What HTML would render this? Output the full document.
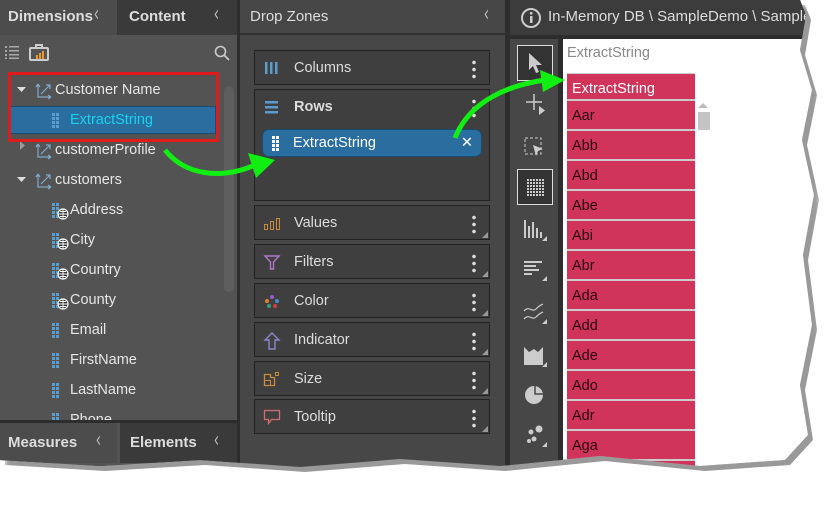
<!DOCTYPE html>
<html><head><meta charset="utf-8"><style>
*{box-sizing:border-box;margin:0;padding:0}
body{width:840px;height:507px;background:#fff;position:relative;overflow:hidden;font-family:"Liberation Sans",sans-serif;font-size:14px;color:#ddd}
.a{position:absolute}
#shadow{left:5px;top:5px;width:815px;height:478px;background:#999;filter:blur(3px);clip-path:polygon(0 0,800px 0,806px 15px,800px 50px,812px 90px,802px 140px,814px 195px,803px 255px,812px 325px,800px 385px,808px 435px,785px 460px,700px 466px,600px 456px,500px 466px,400px 459px,300px 467px,200px 460px,100px 466px,0 460px)}
#main{left:0;top:0;width:815px;height:478px;background:#474747;clip-path:polygon(0 0,800px 0,806px 15px,800px 50px,812px 90px,802px 140px,814px 195px,803px 255px,812px 325px,800px 385px,808px 435px,785px 460px,700px 466px,600px 456px,500px 466px,400px 459px,300px 467px,200px 460px,100px 466px,0 460px)}
.hd{height:35px;line-height:34px;font-size:15px;color:#ddd}
.lt{position:absolute;font-weight:normal;color:#bbb;font-size:22px;font-family:"DejaVu Sans",sans-serif;transform:scaleX(0.6)}
.r{position:absolute;height:30px;line-height:30px;font-size:14.5px;color:#e6e6e6}
.box{position:absolute;left:254px;width:236px;background:#3f3f3f;border:1px solid #222;font-size:14.5px}
.box .t{position:absolute;left:39px;top:9px}
.box svg{position:absolute;left:8px;top:9px}
.dots{position:absolute;right:13px;top:8px;width:4px;height:20px;background:radial-gradient(circle,#ddd 1.6px,transparent 2px) 0 0/4px 7px repeat-y}
.tri{position:absolute;right:1px;bottom:1px;border-left:6px solid transparent;border-bottom:6px solid #999}
.cell{position:absolute;left:567px;width:128px;height:30px;background:#d0345a;border-bottom:2px solid #ccc;line-height:30px;padding-left:5px;color:#2a0a12;font-size:14.5px}
.tb{position:absolute;left:517px;width:36px;height:36px;color:#ccc}
</style></head><body>
<svg width="0" height="0" style="position:absolute"><defs>
<g id="grid"><rect x="0" y="0" width="3" height="3" fill="#5a9ccc"/><rect x="4" y="0" width="3" height="3" fill="#5a9ccc"/><rect x="0" y="4" width="3" height="3" fill="#5a9ccc"/><rect x="4" y="4" width="3" height="3" fill="#5a9ccc"/><rect x="0" y="8" width="3" height="3" fill="#5a9ccc"/><rect x="4" y="8" width="3" height="3" fill="#5a9ccc"/><rect x="0" y="12" width="3" height="3" fill="#5a9ccc"/><rect x="4" y="12" width="3" height="3" fill="#5a9ccc"/></g>
<g id="globe"><circle cx="6" cy="6" r="5" fill="#333" stroke="#fff" stroke-width="1.2"/><path d="M1 6h10M6 1v10M3 3.5h6M3 8.5h6" stroke="#fff" stroke-width="0.9" fill="none"/></g>
<g id="hier"><path d="M3 2v13h13M3 2l-2 3M3 2l2 3M16 15l-3-2M16 15l-3 2M6 12l9-9M11 3h4v4" stroke="#7fa9cc" stroke-width="1.2" fill="none"/></g>
</defs></svg>
<div id="shadow" class="a"></div>
<div id="main" class="a">
<div class="a" style="left:0;top:0;width:237px;height:480px;background:#535353"></div>
<div class="a hd" style="left:0;top:0;width:117px;background:#4c4c4c;padding-left:8px;font-weight:bold">Dimensions<span class="lt" style="left:92px;top:-2px">&lsaquo;</span></div>
<div class="a hd" style="left:117px;top:0;width:120px;background:#3a3a3a;padding-left:12px;font-weight:bold">Content<span class="lt" style="right:16px;top:-2px">&lsaquo;</span></div>
<svg class="a" style="left:5px;top:45px" width="14" height="14"><g fill="#aaa"><rect x="0" y="1" width="2" height="2"/><rect x="4" y="1" width="10" height="1.5"/><rect x="0" y="5" width="2" height="2"/><rect x="4" y="5" width="10" height="1.5"/><rect x="0" y="9" width="2" height="2"/><rect x="4" y="9" width="10" height="1.5"/><rect x="0" y="12.5" width="2" height="1.5"/><rect x="4" y="12.5" width="10" height="1.5"/></g></svg>
<div class="a" style="left:29px;top:47px;width:20px;height:14px;border:2px solid #ccc;border-radius:2px"><div class="a" style="left:5px;top:6px;width:2px;height:4px;background:#e89a2c"></div><div class="a" style="left:8px;top:4px;width:2px;height:6px;background:#e89a2c"></div><div class="a" style="left:11px;top:2px;width:2px;height:8px;background:#e89a2c"></div></div>
<div class="a" style="left:35px;top:44px;width:8px;height:4px;border:2px solid #ccc;border-bottom:0"></div>
<svg class="a" style="left:214px;top:45px" width="16" height="16"><circle cx="6.5" cy="6.5" r="5" fill="none" stroke="#ccc" stroke-width="1.6"/><path d="M10 10l5 5" stroke="#ccc" stroke-width="1.8"/></svg>
<div class="a" style="left:224px;top:86px;width:10px;height:206px;background:#5e5e5e;border-radius:5px"></div>
<div class="a" style="left:9px;top:106px;width:207px;height:28px;background:#2a6ea0;border:1px solid #1b4b70"></div>
<svg class="a" style="left:0;top:75px" width="237" height="345">
<path d="M17 12h9l-4.5 5z" fill="#ddd"/><use href="#hier" x="35" y="7"/>
<use href="#grid" x="52" y="38"/>
<path d="M20 66v9l5-4.5z" fill="#999"/><use href="#hier" x="35" y="67"/>
<path d="M17 102h9l-4.5 5z" fill="#ddd"/><use href="#hier" x="35" y="97"/>
<use href="#grid" x="52" y="128"/><use href="#globe" x="57" y="133"/>
<use href="#grid" x="52" y="158"/><use href="#globe" x="57" y="163"/>
<use href="#grid" x="52" y="188"/><use href="#globe" x="57" y="193"/>
<use href="#grid" x="52" y="218"/><use href="#globe" x="57" y="223"/>
<use href="#grid" x="52" y="248"/><use href="#grid" x="52" y="278"/><use href="#grid" x="52" y="308"/><use href="#grid" x="52" y="338"/>
</svg>
<div class="r" style="left:55px;top:75px">Customer Name</div>
<div class="r" style="left:70px;top:105px;color:#19d2ee">ExtractString</div>
<div class="r" style="left:55px;top:135px">customerProfile</div>
<div class="r" style="left:55px;top:165px">customers</div>
<div class="r" style="left:70px;top:195px">Address</div>
<div class="r" style="left:70px;top:225px">City</div>
<div class="r" style="left:70px;top:255px">Country</div>
<div class="r" style="left:70px;top:285px">County</div>
<div class="r" style="left:70px;top:315px">Email</div>
<div class="r" style="left:70px;top:345px">FirstName</div>
<div class="r" style="left:70px;top:375px">LastName</div>
<div class="r" style="left:70px;top:405px;height:15px;overflow:hidden">Phone</div>
<div class="a" style="left:8px;top:72px;width:211px;height:70px;border:3px solid #e01b1b"></div>
<div class="a" style="left:0;top:420px;width:237px;height:3px;background:#2d2d2d"></div>
<div class="a hd" style="left:0;top:423px;width:117px;height:40px;line-height:40px;background:#4c4c4c;padding-left:8px;font-weight:bold">Measures<span class="lt" style="right:14px;top:-2px">&lsaquo;</span></div>
<div class="a hd" style="left:120px;top:423px;width:117px;height:40px;line-height:40px;background:#3a3a3a;padding-left:10px;font-weight:bold">Elements<span class="lt" style="right:16px;top:-2px">&lsaquo;</span></div>
<div class="a" style="left:237px;top:0;width:3px;height:480px;background:#2d2d2d"></div>
<div class="a hd" style="left:240px;top:0;width:265px;background:#474747;padding-left:10px;border-bottom:2px solid #333">Drop Zones<span class="lt" style="right:14px;top:-2px">&lsaquo;</span></div>
<div class="box" style="top:50px;height:35px"><svg width="18" height="16"><rect x="2" y="2" width="2.5" height="12" fill="#5a9ccc"/><rect x="7" y="2" width="2.5" height="12" fill="#5a9ccc"/><rect x="12" y="2" width="2.5" height="12" fill="#5a9ccc"/></svg><span class="t">Columns</span><div class="dots"></div></div>
<div class="box" style="top:89px;height:112px"><svg width="18" height="16"><rect x="2" y="2" width="13" height="2.5" fill="#5a9ccc"/><rect x="2" y="7" width="13" height="2.5" fill="#5a9ccc"/><rect x="2" y="12" width="13" height="2.5" fill="#5a9ccc"/></svg><span class="t" style="font-weight:bold">Rows</span><div class="dots"></div>
<div class="a" style="left:7px;top:39px;width:220px;height:28px;background:#2a6ea0;border:1px solid #1b4b70;border-radius:7px;color:#fff;line-height:26px;padding-left:30px">ExtractString<span style="position:absolute;right:8px">&#10005;</span>
<svg style="left:9px;top:6px" width="8" height="15"><g fill="#fff"><rect x="0" y="0" width="3" height="3"/><rect x="4" y="0" width="3" height="3"/><rect x="0" y="4" width="3" height="3"/><rect x="4" y="4" width="3" height="3"/><rect x="0" y="8" width="3" height="3"/><rect x="4" y="8" width="3" height="3"/><rect x="0" y="12" width="3" height="3"/><rect x="4" y="12" width="3" height="3"/></g></svg></div></div>
<div class="box" style="top:205px;height:35px"><svg width="18" height="16"><g fill="none" stroke="#c98a3c"><rect x="1.5" y="9.5" width="3" height="5"/><rect x="7.5" y="6.5" width="3" height="8"/><rect x="13.5" y="3.5" width="3" height="11"/></g></svg><span class="t">Values</span><div class="dots"></div><div class="tri"></div></div>
<div class="box" style="top:244px;height:35px"><svg width="18" height="16"><path d="M2 2h14l-5.5 6v7h-3V8z" fill="none" stroke="#b079c8" stroke-width="1.4"/></svg><span class="t">Filters</span><div class="dots"></div><div class="tri"></div></div>
<div class="box" style="top:283px;height:35px"><svg width="18" height="16"><circle cx="9" cy="4" r="2" fill="#9a5cc8"/><circle cx="4" cy="8" r="2" fill="#e08030"/><circle cx="14" cy="8" r="2" fill="#4a8ad0"/><circle cx="6" cy="13" r="2" fill="#3aa080"/><circle cx="12" cy="13" r="2" fill="#d04040"/></svg><span class="t">Color</span><div class="dots"></div><div class="tri"></div></div>
<div class="box" style="top:322px;height:35px"><svg width="18" height="18"><path d="M9 1l7 7h-4v9H6V8H2z" fill="none" stroke="#8a86cc" stroke-width="1.4"/></svg><span class="t">Indicator</span><div class="dots"></div><div class="tri"></div></div>
<div class="box" style="top:361px;height:35px"><svg width="18" height="16"><path d="M1.5 3.5h6v3h4v8h-10z" fill="none" stroke="#c98a3c" stroke-width="1.3"/><path d="M1.5 9.5h6v5" fill="none" stroke="#c98a3c"/><rect x="12.5" y="1.5" width="3" height="3" fill="none" stroke="#c98a3c"/></svg><span class="t">Size</span><div class="dots"></div><div class="tri"></div></div>
<div class="box" style="top:399px;height:35px"><svg width="18" height="16"><path d="M1.5 1.5h15v9h-8l-3 4v-4h-4z" fill="none" stroke="#d07070" stroke-width="1.3"/></svg><span class="t">Tooltip</span><div class="dots"></div><div class="tri"></div></div>
<div class="a" style="left:505px;top:0;width:5px;height:480px;background:#2d2d2d"></div>
<div class="a hd" style="left:510px;top:0;width:305px;background:#3c3c3c;padding-left:38px;font-size:15px;white-space:nowrap">In-Memory DB \ SampleDemo \ SampleDemo</div>
<svg class="a" style="left:520px;top:7px" width="22" height="22"><circle cx="11" cy="11" r="9" fill="none" stroke="#ccc" stroke-width="2"/><rect x="10" y="9" width="2.5" height="7" fill="#ccc"/><circle cx="11.2" cy="6.3" r="1.4" fill="#ccc"/></svg>
<div class="a" style="left:510px;top:35px;width:305px;height:4px;background:#2d2d2d"></div>
<div class="a" style="left:510px;top:39px;width:48px;height:440px;background:#474747"></div>
<div class="a" style="left:558px;top:39px;width:5px;height:440px;background:#2d2d2d"></div>
<div class="a" style="left:563px;top:39px;width:260px;height:440px;background:#fff"></div>
<div class="tb" style="top:45px;border:1px solid #ddd;background:#333"><svg width="34" height="34"><path d="M11 7v17l4-4 3 7 3-1-3-7h6z" fill="#ccc"/></svg></div>
<div class="tb" style="top:86px"><svg width="36" height="36"><path d="M17 8v16M9 16h16" stroke="#ccc" stroke-width="1.5"/><path d="M22 20v9l6-4.5z" fill="#ccc"/></svg></div>
<div class="tb" style="top:130px"><svg width="36" height="36"><rect x="8" y="8" width="16" height="16" fill="none" stroke="#ccc" stroke-dasharray="3 2"/><path d="M16 15l10 4-5 2-2 5z" fill="#ccc"/></svg></div>
<div class="tb" style="top:169px;border:1px solid #ddd;background:#333"><div class="a" style="left:9px;top:9px;width:17px;height:17px;background:repeating-linear-gradient(90deg,#ccc 0 2px,transparent 2px 3px);-webkit-mask:repeating-linear-gradient(0deg,#000 0 2px,transparent 2px 3px)"></div></div>
<div class="tb" style="top:212px"><svg width="36" height="36"><g fill="#ccc"><rect x="7" y="8" width="2" height="18"/><rect x="11" y="14" width="2" height="12"/><rect x="15" y="10" width="2" height="16"/><rect x="19" y="16" width="2" height="10"/><rect x="23" y="20" width="2" height="6"/></g><path d="M30 24v5h-5z" fill="#ccc"/></svg></div>
<div class="tb" style="top:252px"><svg width="36" height="36"><g fill="#ccc"><rect x="7" y="9" width="18" height="2"/><rect x="7" y="13" width="12" height="2"/><rect x="7" y="17" width="15" height="2"/><rect x="7" y="21" width="8" height="2"/></g><path d="M30 24v5h-5z" fill="#ccc"/></svg></div>
<div class="tb" style="top:295px"><svg width="36" height="36"><path d="M7 16c5-6 8 2 12-2s5-4 7-5M7 24c5-6 8 2 12-2s5-4 7-5" stroke="#ccc" fill="none" stroke-width="1.2"/><path d="M30 24v5h-5z" fill="#ccc"/></svg></div>
<div class="tb" style="top:338px"><svg width="36" height="36"><path d="M7 9l5 5 5-3 4 3 5-5v18H7z" fill="#ccc"/><path d="M30 24v5h-5z" fill="#ccc"/></svg></div>
<div class="tb" style="top:377px"><svg width="36" height="36"><circle cx="17" cy="18" r="9" fill="#ccc"/><path d="M18 9v8h8" stroke="#474747" stroke-width="1.5" fill="none"/></svg></div>
<div class="tb" style="top:418px"><svg width="36" height="36"><circle cx="22" cy="11" r="3.5" fill="#ccc"/><circle cx="14" cy="14" r="2.5" fill="#ccc"/><circle cx="17" cy="21" r="2.5" fill="#ccc"/><circle cx="12" cy="23" r="2" fill="#ccc"/><path d="M30 24v5h-5z" fill="#ccc"/></svg></div>
<div class="a" style="left:567px;top:45px;color:#888;font-size:14.5px">ExtractString</div>
<div class="cell" style="top:73px;height:28px;color:#fff;border-top:1px solid #ccc">ExtractString</div>
<div class="cell" style="top:101px">Aar</div>
<div class="cell" style="top:131px">Abb</div>
<div class="cell" style="top:161px">Abd</div>
<div class="cell" style="top:191px">Abe</div>
<div class="cell" style="top:221px">Abi</div>
<div class="cell" style="top:251px">Abr</div>
<div class="cell" style="top:281px">Ada</div>
<div class="cell" style="top:311px">Add</div>
<div class="cell" style="top:341px">Ade</div>
<div class="cell" style="top:371px">Ado</div>
<div class="cell" style="top:401px">Adr</div>
<div class="cell" style="top:431px">Aga</div>
<div class="cell" style="top:461px">Agn</div>
<div class="a" style="left:698px;top:103px;border:5px solid transparent;border-bottom:5px solid #bbb;border-top:0"></div>
<div class="a" style="left:698px;top:112px;width:12px;height:18px;background:#c4c4c4"></div>
</div>
<svg class="a" style="left:0;top:0" width="840" height="507">
<path d="M165 150 C185 175 220 180 255 165" fill="none" stroke="#11ee11" stroke-width="5"/>
<path d="M248 153 L275 160 L256 178 z" fill="#11ee11"/>
<path d="M455 138 C470 100 510 85 545 80" fill="none" stroke="#11ee11" stroke-width="5"/>
<path d="M540 70 L565 80 L543 92 z" fill="#11ee11"/>
</svg>
</body></html>
